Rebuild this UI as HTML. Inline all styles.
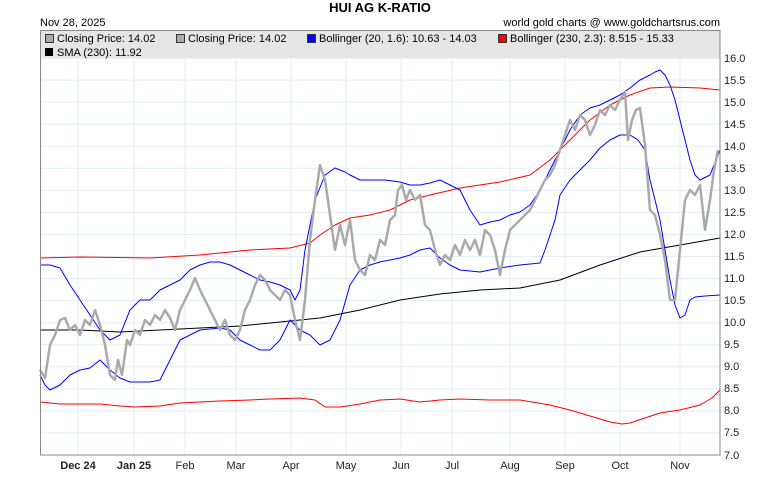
<!DOCTYPE html><html><head><style>body{margin:0;background:#fff}svg{display:block;font-family:"Liberation Sans",sans-serif}</style></head><body>
<svg width="760" height="491" xmlns="http://www.w3.org/2000/svg">
<text x="380" y="12" font-size="13" font-weight="bold" text-anchor="middle">HUI AG K-RATIO</text>
<text x="40" y="26" font-size="11">Nov 28, 2025</text>
<text x="720" y="26" font-size="11" text-anchor="end">world gold charts @ www.goldchartsrus.com</text>
<g stroke="#e3eef8" stroke-width="1">
<line x1="78" y1="30" x2="78" y2="455"/><line x1="134" y1="30" x2="134" y2="455"/><line x1="185" y1="30" x2="185" y2="455"/><line x1="236" y1="30" x2="236" y2="455"/><line x1="291" y1="30" x2="291" y2="455"/><line x1="346" y1="30" x2="346" y2="455"/><line x1="401" y1="30" x2="401" y2="455"/><line x1="452" y1="30" x2="452" y2="455"/><line x1="510" y1="30" x2="510" y2="455"/><line x1="565" y1="30" x2="565" y2="455"/><line x1="620" y1="30" x2="620" y2="455"/><line x1="680" y1="30" x2="680" y2="455"/>
</g>
<g stroke="#e3eef8">
<line x1="40" x2="720" y1="80.1" y2="80.1"/><line x1="40" x2="720" y1="102.1" y2="102.1"/><line x1="40" x2="720" y1="124.2" y2="124.2"/><line x1="40" x2="720" y1="146.3" y2="146.3"/><line x1="40" x2="720" y1="168.3" y2="168.3"/><line x1="40" x2="720" y1="190.4" y2="190.4"/><line x1="40" x2="720" y1="212.4" y2="212.4"/><line x1="40" x2="720" y1="234.5" y2="234.5"/><line x1="40" x2="720" y1="256.5" y2="256.5"/><line x1="40" x2="720" y1="278.6" y2="278.6"/><line x1="40" x2="720" y1="300.6" y2="300.6"/><line x1="40" x2="720" y1="322.7" y2="322.7"/><line x1="40" x2="720" y1="344.7" y2="344.7"/><line x1="40" x2="720" y1="366.8" y2="366.8"/><line x1="40" x2="720" y1="388.8" y2="388.8"/><line x1="40" x2="720" y1="410.9" y2="410.9"/><line x1="40" x2="720" y1="432.9" y2="432.9"/>
</g>
<rect x="40.5" y="30.5" width="679" height="28" fill="#e6e6e6" stroke="none"/>
<g font-size="11">
<rect x="45.5" y="34.5" width="8" height="8" fill="#aaa" stroke="#333"/><text x="57" y="42">Closing Price: 14.02</text>
<rect x="176.5" y="34.5" width="8" height="8" fill="#aaa" stroke="#333"/><text x="188" y="42">Closing Price: 14.02</text>
<rect x="307.5" y="34.5" width="8" height="8" fill="#00f" stroke="#333"/><text x="319" y="42">Bollinger (20, 1.6): 10.63 - 14.03</text>
<rect x="498.5" y="34.5" width="8" height="8" fill="#f00" stroke="#333"/><text x="510" y="42">Bollinger (230, 2.3): 8.515 - 15.33</text>
<rect x="45" y="48" width="8" height="8" fill="#000"/><text x="57" y="56">SMA (230): 11.92</text>
</g>
<g fill="none" stroke-linejoin="round">
<polyline stroke="#f00" stroke-width="1" points="40,258 80,257 150,258 200,255 250,250 290,248 310,243 320,235 335,225 350,218 370,215 390,210 410,200 430,195 460,188 500,182 530,175 550,160 570,140 590,120 610,105 630,95 650,88 670,87 700,88 720,90"/>
<polyline stroke="#f00" stroke-width="1" points="40,402 60,404 100,404 120,406 135,407 160,406 180,403 200,402 220,401 250,400 270,399 300,398 315,400 325,407 340,407 360,404 380,400 400,399 420,402 440,400 460,399 490,400 520,400 550,405 570,410 590,416 610,422 622,424 630,423 645,418 660,413 680,410 700,405 712,398 720,390"/>
<polyline stroke="#000" stroke-width="1" points="40,330 80,330 120,332 160,330 200,328 240,326 280,322 320,318 360,310 400,300 440,294 480,290 520,288 560,280 600,265 640,252 680,245 720,238"/>
<polyline stroke="#00f" stroke-width="1" points="40,265 50,265 60,268 70,285 80,300 90,315 100,330 110,340 120,335 130,310 140,300 150,300 160,290 170,285 180,280 190,270 200,265 210,262 220,262 230,265 240,270 250,275 260,280 270,282 280,285 290,290 295,300 300,290 305,250 315,200 325,175 335,168 345,172 350,175 360,180 370,180 385,180 400,182 410,185 420,185 430,183 440,180 450,185 460,190 470,210 480,225 490,222 500,220 510,215 520,212 530,205 540,190 550,170 560,150 570,130 580,115 590,108 600,105 610,100 620,95 630,88 640,80 650,75 655,72 660,70 665,75 670,85 675,100 680,120 685,140 690,160 695,175 700,180 710,175 720,150"/>
<polyline stroke="#00f" stroke-width="1" points="40,375 45,385 50,390 60,385 70,375 80,370 90,368 100,360 110,370 120,378 130,382 150,382 160,380 170,360 180,340 190,335 200,330 220,328 230,330 240,340 250,345 260,350 270,350 280,340 290,320 300,330 310,335 320,345 330,340 340,320 350,285 360,270 370,265 380,262 400,258 410,255 420,250 430,248 440,258 450,265 460,270 480,272 500,268 520,265 540,263 545,250 550,235 555,220 560,195 570,180 580,170 590,160 600,148 610,140 620,135 630,135 638,140 645,150 650,180 655,200 660,220 665,250 670,280 675,305 680,318 685,315 690,300 695,297 705,296 720,295"/>
<polyline stroke="#aaa" stroke-width="2.5" points="40,370 45,378 50,345 55,335 60,320 65,318 70,330 75,325 80,335 85,320 90,325 95,310 100,325 105,345 110,375 115,380 118,360 122,375 127,340 130,345 135,330 140,335 145,320 150,325 155,315 160,320 165,310 170,318 175,330 180,310 185,300 190,290 195,278 200,290 205,300 210,310 215,320 220,330 225,320 230,335 235,340 240,330 245,310 250,300 255,285 260,275 265,280 270,290 275,295 280,300 285,290 290,295 295,320 300,340 305,300 310,240 315,200 320,165 325,180 330,215 335,250 340,225 345,245 350,220 355,260 360,270 365,275 370,255 375,260 380,240 385,245 390,220 395,215 398,190 402,185 406,200 410,190 415,200 420,195 425,225 430,230 435,250 440,265 445,255 450,260 455,245 460,255 465,240 470,250 475,240 480,255 485,230 490,235 495,250 500,275 505,250 510,230 515,225 520,220 525,215 530,210 535,200 540,190 545,180 550,175 555,165 560,150 565,135 570,120 575,130 580,115 585,120 590,135 595,125 600,110 605,115 610,105 615,110 620,100 625,92 628,140 632,120 636,110 640,108 645,145 650,210 655,215 660,235 665,260 670,300 675,300 680,250 685,200 690,190 695,195 700,185 705,230 710,200 714,170 718,150"/>
</g>
<rect x="40.5" y="30.5" width="679.5" height="424.5" fill="none" stroke="#888"/>
<g font-size="11" fill="#222">
<text x="724" y="62">16.0</text><text x="724" y="84">15.5</text><text x="724" y="106">15.0</text><text x="724" y="128">14.5</text><text x="724" y="150">14.0</text><text x="724" y="172">13.5</text><text x="724" y="194">13.0</text><text x="724" y="216">12.5</text><text x="724" y="238">12.0</text><text x="724" y="260">11.5</text><text x="724" y="282">11.0</text><text x="724" y="304">10.5</text><text x="724" y="326">10.0</text><text x="724" y="348">9.5</text><text x="724" y="370">9.0</text><text x="724" y="392">8.5</text><text x="724" y="414">8.0</text><text x="724" y="436">7.5</text><text x="724" y="459">7.0</text>
</g>
<g font-size="11" fill="#222" text-anchor="middle">
<text x="78" y="469" font-weight="bold">Dec 24</text><text x="134" y="469" font-weight="bold">Jan 25</text><text x="185" y="469">Feb</text><text x="236" y="469">Mar</text><text x="291" y="469">Apr</text><text x="346" y="469">May</text><text x="401" y="469">Jun</text><text x="452" y="469">Jul</text><text x="510" y="469">Aug</text><text x="565" y="469">Sep</text><text x="620" y="469">Oct</text><text x="680" y="469">Nov</text>
</g>
</svg>
</body></html>
